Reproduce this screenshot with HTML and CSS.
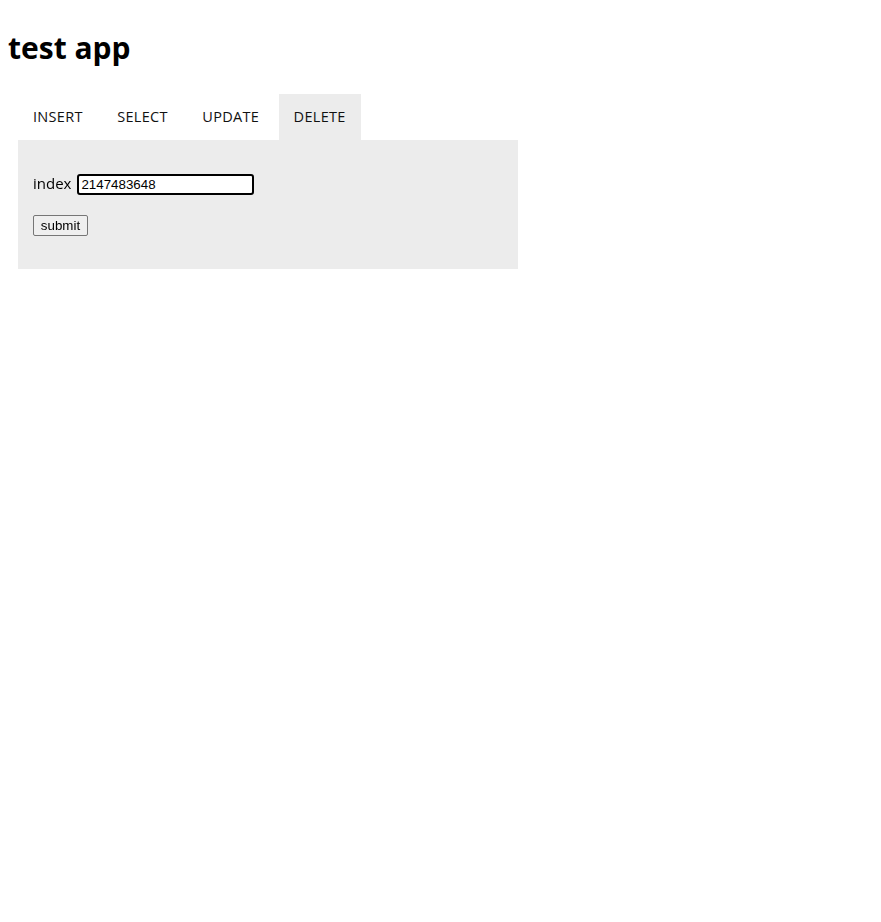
FILE: index.html
```html
<!DOCTYPE html>
<html>
<head>
<meta charset="utf-8">
<title>test app</title>
<link rel="stylesheet" href="styles.css">
</head>
<body>
<h1 class="title">test app</h1>
<div class="app">
  <ul class="tabs">
    <li class="tab">INSERT</li>
    <li class="tab">SELECT</li>
    <li class="tab">UPDATE</li>
    <li class="tab active">DELETE</li>
  </ul>
  <div class="panel">
    <form class="form">
      <div class="row">
        <label class="label" for="index">index</label>
        <input class="field" id="index" type="text" value="2147483648" autofocus>
      </div>
      <div class="row">
        <button class="btn" type="button">submit</button>
      </div>
    </form>
  </div>
</div>
</body>
</html>
```
FILE: styles.css
```css
body {
  margin: 8px;
  font-family: "Open Sans", "DejaVu Sans", sans-serif;
  color: #000;
  background: #fff;
}
.title {
  font-size: 30px;
  font-weight: bold;
  margin: 22px 0 0 0;
  line-height: 36px;
}
.app {
  margin: 28px 0 0 10px;
  width: 500px;
}
.tabs {
  list-style: none;
  margin: 0;
  padding: 0;
  display: flex;
  gap: 4.5px;
}
.tab {
  font-size: 14.5px;
  letter-spacing: 0.3px;
  padding: 0 15px;
  height: 46px;
  line-height: 45px;
  color: #111;
}
.tab.active {
  background: #ececec;
}
.panel {
  background: #ececec;
  padding: 34px 15px 33px;
}
.row {
  display: flex;
  align-items: center;
}
.row + .row {
  margin-top: 20px;
}
.label {
  font-size: 15px;
  line-height: 19px;
  margin-right: 6px;
  position: relative;
  top: -1px;
}
.field {
  font-family: "Liberation Sans", Arial, sans-serif;
  font-size: 13.333px;
  width: 177px;
  height: 21px;
  box-sizing: border-box;
  border: 2px solid #000;
  border-radius: 3px;
  padding: 0 2px;
  background: #fff;
  outline: none;
}
.btn {
  font-family: "Liberation Sans", Arial, sans-serif;
  font-size: 13.333px;
  width: 55px;
  height: 21px;
  padding: 0;
  border: 1px solid #767676;
  border-radius: 2px;
  background: #efefef;
  color: #000;
}
```
